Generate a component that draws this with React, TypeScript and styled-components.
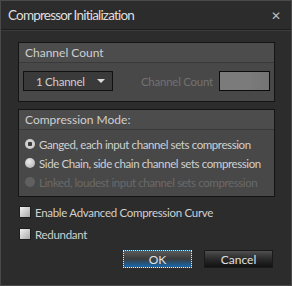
import styled, { createGlobalStyle } from "styled-components";

const Global = createGlobalStyle`
    html, body { margin: 0; padding: 0; background: #2b2b2b; }
    body { font-family: Lato, "Noto Sans", sans-serif; }
`;

const Window = styled.div`
    width: 292px;
    height: 286px;
    box-sizing: border-box;
    background: #2c2c2c;
    border: 1px solid #4a4a4a;
    display: flex;
    flex-direction: column;
`;

const TitleBar = styled.div`
    height: 28px;
    display: flex;
    align-items: center;
    justify-content: space-between;
    padding: 0 8px 0 7px;
    border-bottom: 1px solid #1c1c1c;
    box-shadow: 0 1px 0 #3c3c3c;
`;

const Title = styled.div`
    font-size: 13.5px;
    letter-spacing: -0.8px;
    color: #dedede;
`;

const Close = styled.div`
    font-size: 12px;
    color: #bdbdbd;
    width: 14px;
    text-align: center;
`;

const Body = styled.div`
    padding: 12px 16px 0 17px;
    display: flex;
    flex-direction: column;
`;

const Group = styled.div<{ mt?: number }>`
    border: 1px solid #141414;
    background: #484848;
    margin-top: ${(p) => p.mt ?? 0}px;
`;

const GroupHeader = styled.div`
    height: 19px;
    padding-left: 6px;
    display: flex;
    align-items: center;
    font-size: 12px;
    color: #cfcfcf;
    background: #4c4c4c;
    border-bottom: 1px solid #3a3a3a;
    white-space: nowrap;
`;

const ChannelRow = styled.div`
    display: flex;
    align-items: center;
    padding: 8px 4px 10px 4px;
`;

const Select = styled.div`
    width: 90px;
    height: 20px;
    box-sizing: border-box;
    border: 1px solid #111;
    background: #3a3a3a;
    display: flex;
    align-items: center;
    justify-content: space-between;
    padding: 0 7px 0 12px;
    font-size: 11.5px;
    letter-spacing: -0.25px;
    color: #d0d0d0;
    white-space: nowrap;
`;

const Arrow = styled.span`
    width: 0;
    height: 0;
    border-left: 4px solid transparent;
    border-right: 4px solid transparent;
    border-top: 4px solid #dcdcdc;
`;

const DisabledLabel = styled.div`
    margin-left: auto;
    margin-right: 6px;
    font-size: 11.5px;
    letter-spacing: -0.25px;
    color: #727272;
    white-space: nowrap;
`;

const CountBox = styled.div`
    width: 51px;
    height: 20px;
    box-sizing: border-box;
    border: 1px solid #0c0c0c;
    background: linear-gradient(90deg, #7b7b7b 60%, #747474);
`;

const RadioList = styled.div`
    display: flex;
    flex-direction: column;
    gap: 3px;
    padding: 6px 0 6px 6px;
`;

const RadioRow = styled.label<{ disabled?: boolean }>`
    display: flex;
    align-items: center;
    gap: 4px;
    height: 16px;
    font-size: 11.5px;
    letter-spacing: -0.4px;
    white-space: nowrap;
    color: ${(p) => (p.disabled ? "#6a6a6a" : "#d0d0d0")};
`;

const RadioDot = styled.span<{ checked?: boolean; disabled?: boolean }>`
    flex: none;
    width: 10px;
    height: 10px;
    border-radius: 50%;
    box-sizing: border-box;
    background: ${(p) =>
        p.disabled
            ? "#606060"
            : p.checked
            ? "radial-gradient(circle, #3a3a3a 0 2px, #cfcfcf 2.5px)"
            : "radial-gradient(circle at 40% 35%, #ececec, #a9a9a9)"};
`;

const Checks = styled.div`
    display: flex;
    flex-direction: column;
    gap: 6px;
    margin-top: 7px;
    padding-left: 1px;
`;

const CheckRow = styled.label`
    display: flex;
    align-items: center;
    gap: 4px;
    height: 16px;
    font-size: 11.5px;
    letter-spacing: -0.3px;
    color: #d0d0d0;
    white-space: nowrap;
`;

const CheckBox = styled.span`
    flex: none;
    width: 10px;
    height: 10px;
    background: linear-gradient(135deg, #f2f2f2, #a8a8a8);
    border: 1px solid #1e1e1e;
`;

const Buttons = styled.div`
    display: flex;
    justify-content: flex-end;
    gap: 12px;
    margin-top: 8px;
    padding-right: 2px;
`;

const Button = styled.div<{ primary?: boolean }>`
    width: 69px;
    height: 18px;
    box-sizing: border-box;
    display: flex;
    align-items: center;
    justify-content: center;
    font-size: 12px;
    color: #e0e0e0;
    background: ${(p) =>
        p.primary
            ? "linear-gradient(#5a5a5a, #3b3b3b 50%, #1668b0 100%)"
            : "linear-gradient(#4f4f4f, #2a2a2a 50%, #111 100%)"};
    border: ${(p) => (p.primary ? "1px dotted #e8e8e8" : "1px solid #1a1a1a")};
`;

function App() {
    return (
        <>
            <Global />
            <Window>
                <TitleBar>
                    <Title>Compressor Initialization</Title>
                    <Close>✕</Close>
                </TitleBar>
                <Body>
                    <Group>
                        <GroupHeader>Channel Count</GroupHeader>
                        <ChannelRow>
                            <Select>
                                1 Channel
                                <Arrow />
                            </Select>
                            <DisabledLabel>Channel Count</DisabledLabel>
                            <CountBox />
                        </ChannelRow>
                    </Group>
                    <Group mt={7}>
                        <GroupHeader>Compression Mode:</GroupHeader>
                        <RadioList>
                            <RadioRow>
                                <RadioDot checked />
                                Ganged, each input channel sets compression
                            </RadioRow>
                            <RadioRow>
                                <RadioDot />
                                Side Chain, side chain channel sets compression
                            </RadioRow>
                            <RadioRow disabled>
                                <RadioDot disabled />
                                Linked, loudest input channel sets compression
                            </RadioRow>
                        </RadioList>
                    </Group>
                    <Checks>
                        <CheckRow>
                            <CheckBox />
                            Enable Advanced Compression Curve
                        </CheckRow>
                        <CheckRow>
                            <CheckBox />
                            Redundant
                        </CheckRow>
                    </Checks>
                    <Buttons>
                        <Button primary>OK</Button>
                        <Button>Cancel</Button>
                    </Buttons>
                </Body>
            </Window>
        </>
    );
}

export default App;
